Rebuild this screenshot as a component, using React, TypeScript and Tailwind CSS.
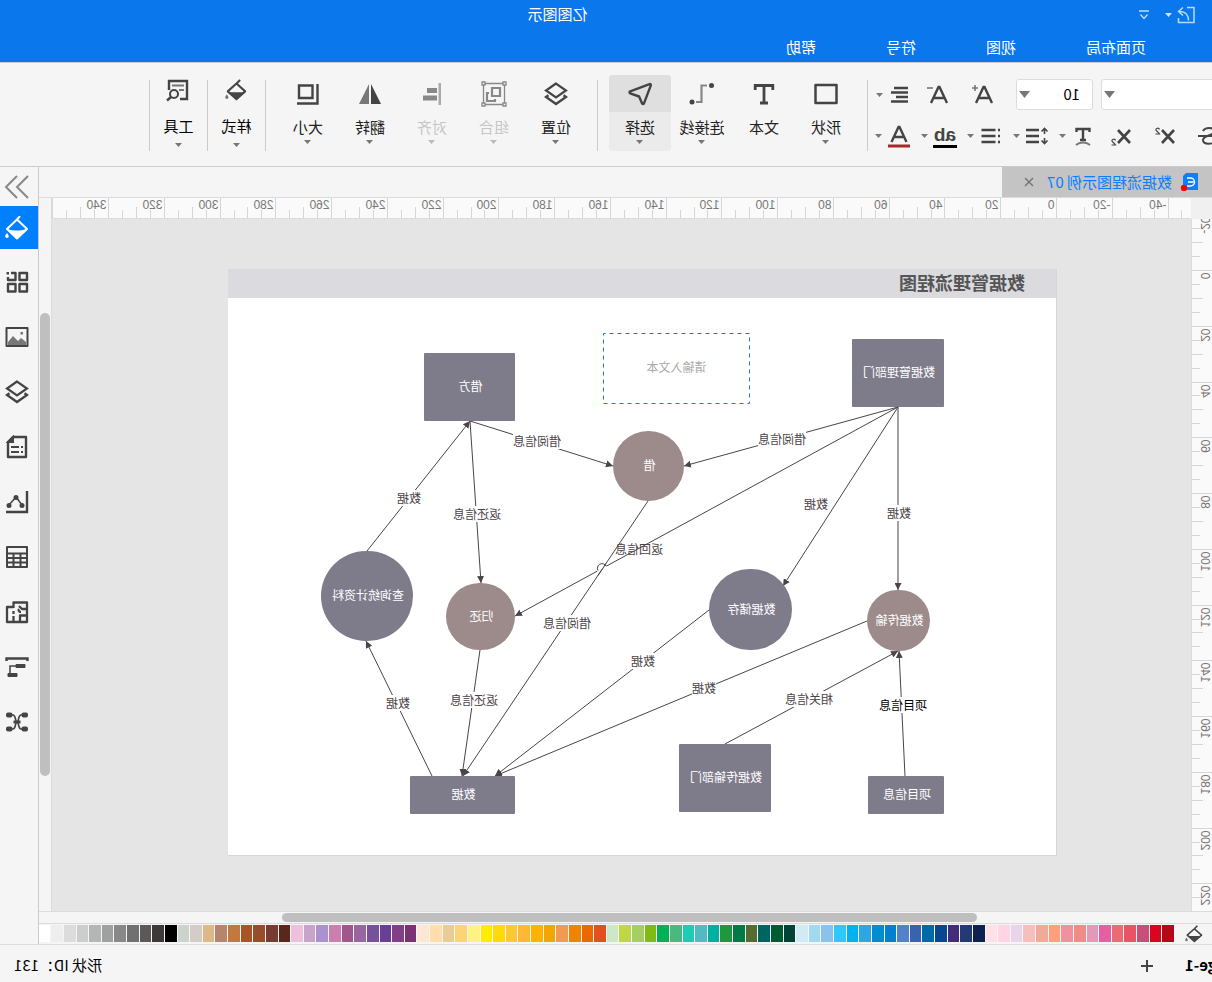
import type { ReactNode } from "react";
import clsx from "clsx";

type Point = [number, number];

type DiagramNode = {
  id: string;
  label: string;
  kind: "box" | "circle";
  tone: "slate" | "brown";
  x: number;
  y: number;
  w: number;
  h: number;
};

type DiagramEdge = {
  id: string;
  from: Point;
  to: Point;
  label: string;
  labelAt: Point;
  strong?: boolean;
};

const menus = ["页面布局", "视图", "符号", "帮助"];

// Sheet coordinates, origin at the sheet's top left corner.
const nodes: DiagramNode[] = [
  { id: "admin", label: "数据管理部门", kind: "box", tone: "slate", x: 112, y: 70, w: 92, h: 68 },
  { id: "borrower", label: "借方", kind: "box", tone: "slate", x: 541, y: 84, w: 91, h: 68 },
  { id: "lend", label: "借", kind: "circle", tone: "brown", x: 372, y: 162, w: 71, h: 70 },
  { id: "query", label: "查询统计资料", kind: "circle", tone: "slate", x: 643, y: 282, w: 92, h: 90 },
  { id: "return", label: "归还", kind: "circle", tone: "brown", x: 541, y: 314, w: 69, h: 67 },
  { id: "store", label: "数据储存", kind: "circle", tone: "slate", x: 264, y: 300, w: 83, h: 81 },
  { id: "transfer", label: "数据传输", kind: "circle", tone: "brown", x: 126, y: 321, w: 63, h: 61 },
  { id: "transfer-dept", label: "数据传输部门", kind: "box", tone: "slate", x: 285, y: 475, w: 92, h: 68 },
  { id: "project", label: "项目信息", kind: "box", tone: "slate", x: 112, y: 507, w: 76, h: 38 },
  { id: "data", label: "数据", kind: "box", tone: "slate", x: 541, y: 507, w: 105, h: 38 },
];

const edges: DiagramEdge[] = [
  { id: "e1", from: [158, 138], to: [158, 321], label: "数据", labelAt: [157, 244] },
  { id: "e2", from: [158, 138], to: [273, 317], label: "数据", labelAt: [240, 235] },
  { id: "e3", from: [158, 138], to: [372, 197], label: "借阅信息", labelAt: [274, 170] },
  { id: "e4", from: [158, 138], to: [541, 347], label: "返回信息", labelAt: [417, 280] },
  { id: "e5", from: [586, 152], to: [443, 197], label: "借阅信息", labelAt: [519, 172] },
  { id: "e6", from: [586, 152], to: [575, 314], label: "返还信息", labelAt: [579, 245] },
  { id: "e7", from: [689, 282], to: [586, 152], label: "数据", labelAt: [647, 229] },
  { id: "e8", from: [408, 232], to: [593, 507], label: "借阅信息", labelAt: [489, 354] },
  { id: "e9", from: [576, 381], to: [594, 507], label: "返还信息", labelAt: [582, 431] },
  { id: "e10", from: [347, 341], to: [561, 507], label: "数据", labelAt: [413, 392] },
  { id: "e11", from: [189, 352], to: [561, 507], label: "数据", labelAt: [352, 419] },
  { id: "e12", from: [331, 475], to: [158, 382], label: "相关信息", labelAt: [247, 430] },
  { id: "e13", from: [151, 507], to: [157, 382], label: "项目信息", labelAt: [153, 436], strong: true },
  { id: "e14", from: [624, 507], to: [690, 372], label: "数据", labelAt: [658, 434] },
];

const swatches = [
  "#b30a18", "#d9051f", "#c94f7a", "#ea5266", "#ec6a73", "#e65f9e", "#e29ab8", "#ee8d88", "#f1919f", "#ffa07a",
  "#efab98", "#f5bfbd", "#ead4e8", "#ffd5e6", "#ffe0e6", "#0d2250", "#233a72", "#432c78", "#06478f", "#0069a8",
  "#3c61ad", "#5383c6", "#0080d0", "#008dd2", "#2ca7e3", "#00b2f0", "#2ec8fb", "#8bc2ec", "#a0d9f0", "#d0ebf6",
  "#004438", "#005a32", "#006562", "#566b2f", "#007b46", "#1e983c", "#00b09f", "#50bcc2", "#1acdb3", "#48ba7d",
  "#00b155", "#7fbb10", "#a5cf62", "#bed742", "#cde8c8", "#e25020", "#eb6800", "#f08400", "#f29a52", "#f2a600",
  "#ffb200", "#ffb833", "#fac934", "#ffd90a", "#ffec00", "#fdf284", "#fdd475", "#eacc9a", "#ffddad", "#fce8d2",
  "#7b3275", "#833f85", "#683f94", "#765399", "#99679f", "#9f588c", "#cd7eb0", "#a992ce", "#c8a5c8", "#ebc1dc",
  "#5a281b", "#783b31", "#954d2b", "#a95328", "#c07942", "#b5866d", "#dfb887", "#d5ccc7", "#cad3cc", "#000000",
  "#3e3939", "#5a5858", "#707070", "#888888", "#9fa1a0", "#b3b6b5", "#cccecd", "#dcdcdc", "#eeeeee", "#ffffff",
];

function Icon({ size = 24, className, children }: { size?: number; className?: string; children: ReactNode }) {
  return (
    <svg
      width={size}
      height={size}
      viewBox={`0 0 ${size} ${size}`}
      fill="none"
      stroke="#444"
      strokeWidth="2"
      className={clsx("shrink-0", className)}
      aria-hidden="true"
    >
      {children}
    </svg>
  );
}

function Caret({ faded = false }: { faded?: boolean }) {
  return (
    <svg width="7" height="4" viewBox="0 0 7 4" fill={faded ? "#bbb" : "#777"} className="shrink-0" aria-hidden="true">
      <path d="M0 0h7L3.500 4z" />
    </svg>
  );
}

function LayersIcon() {
  return (
    <Icon>
      <path d="M12 1.500l10 7-10 7-10-7z" strokeWidth="2.200" />
      <path d="M4.500 13.200L2 15l10 7 10-7-2.500-1.800" strokeWidth="2.400" />
    </Icon>
  );
}

function BucketIcon({ size = 24 }: { size?: number }) {
  return (
    <svg width={size} height={size} viewBox="0 0 24 24" fill="none" stroke="#444" strokeWidth="2.200" aria-hidden="true">
      <path d="M7.500 1l4 4M11.500 5L2 13.500l9.500 8.500 9.500-8.500z" strokeLinejoin="round" />
      <path d="M3 14.500h17L11.500 22z" fill="#444" stroke="none" />
      <path d="M22 16.500c1.300 2 1.800 2.800 1.800 3.500a1.800 1.800 0 0 1-3.600 0c0-.7.500-1.500 1.800-3.500z" fill="#777" stroke="none" />
    </svg>
  );
}

function FontIcon({ children }: { children: ReactNode }) {
  return (
    <Icon>
      <path d="M3 20L10.500 4h1L19 20M6 15h10" strokeWidth="2.400" />
      {children}
    </Icon>
  );
}

function ScriptIcon({ low = false }: { low?: boolean }) {
  return (
    <Icon>
      <path d="M3 6l12 13M15 6L3 19" strokeWidth="2.600" />
      <path
        d={low ? "M17.500 16.500c.5-2 4-1.500 3.500.5-.3 1-2.500 2-3.500 4h4" : "M17.500 5.500c.5-2 4-1.500 3.500.5-.3 1-2.500 2-3.500 4h4"}
        strokeWidth="1.200"
      />
    </Icon>
  );
}

function FormatButton({ name, menu = false, children }: { name: string; menu?: boolean; children: ReactNode }) {
  return (
    <button type="button" aria-label={name} className="flex h-6 shrink-0 items-center gap-[5px]">
      {children}
      {menu && <Caret />}
    </button>
  );
}

function Divider() {
  return <div className="mt-[17px] h-[71px] w-px shrink-0 bg-[#cbcbcb]" />;
}

type ToolButtonProps = {
  label: string;
  menu?: boolean;
  active?: boolean;
  disabled?: boolean;
  children: ReactNode;
};

function ToolButton({ label, menu = true, active = false, disabled = false, children }: ToolButtonProps) {
  return (
    <button
      type="button"
      disabled={disabled}
      className={clsx(
        "mt-3 flex h-[76px] w-[62px] shrink-0 flex-col items-center rounded-sm",
        active && "bg-[#ebebeb]",
        disabled ? "text-[#c6c6c6]" : "text-[#222]",
      )}
    >
      <span className={clsx("flex h-[37px] w-full items-center justify-center rounded-t-sm", active && "bg-[#dfdfdf]")}>
        {children}
      </span>
      <span className="mt-[5px] text-[15px] leading-5">{label}</span>
      {menu && <span className="mt-[3px] flex"><Caret faded={disabled} /></span>}
    </button>
  );
}

function SideToolButton({ label, children }: { label: string; children: ReactNode }) {
  return (
    <button type="button" className="mt-3 flex h-[76px] w-[57px] shrink-0 flex-col items-center text-black">
      <span className="flex h-[30px] items-center">{children}</span>
      <span className="mt-[11px] text-[15px] leading-5">{label}</span>
      <span className="mt-[7px] flex"><Caret /></span>
    </button>
  );
}

function Combo({ name, value, className }: { name: string; value: string; className?: string }) {
  return (
    <div className={clsx("relative h-[31px]", className)}>
      <select
        aria-label={name}
        defaultValue={value}
        className="h-full w-full appearance-none rounded-[3px] border border-[#dcdcdc] bg-white pl-3 text-[15px] text-black"
      >
        <option value={value}>{value}</option>
      </select>
      <svg width="11" height="7" viewBox="0 0 11 7" className="pointer-events-none absolute right-[3px] top-3" aria-hidden="true">
        <path d="M0 0h11L5.500 7z" fill="#777" />
      </svg>
    </div>
  );
}

function TitleBar() {
  return (
    <header className="border-b border-[#cbcbcb] bg-[#0a77ec] text-white">
      <div className="flex h-8 items-center pb-[3px] pl-4">
        <button type="button" aria-label="撤销" className="flex items-center gap-1">
          <svg width="20" height="20" viewBox="0 0 20 20" fill="none" stroke="#b9dbff" strokeWidth="1.500" aria-hidden="true">
            <path d="M9 2.500H2v15h15.500V13" />
            <path d="M7.500 15.500c0-5 3-9 9-9M13 2.500l4.500 4-4.500 4" />
          </svg>
          <svg width="7" height="4" viewBox="0 0 7 4" fill="#cfe6ff" aria-hidden="true">
            <path d="M0 0h7L3.500 4z" />
          </svg>
        </button>
        <button type="button" aria-label="自定义" className="ml-4">
          <svg width="10" height="10" viewBox="0 0 10 10" fill="none" stroke="#bfe0ff" strokeWidth="1.300" aria-hidden="true">
            <path d="M0 1h10M1.500 4.500L5 8.500l3.500-4" />
          </svg>
        </button>
        <h1 className="mx-auto pl-6 text-[15px]">亿图图示</h1>
      </div>
      <nav className="flex h-[30px] items-center gap-[70px] pl-[66px] text-[15px]">
        {menus.map((menu) => (
          <button key={menu} type="button" className="leading-5">
            {menu}
          </button>
        ))}
      </nav>
    </header>
  );
}

function FontGroup() {
  return (
    <div className="w-[344px] shrink-0 pt-4">
      <div className="flex items-center">
        <Combo name="字体" value="" className="-ml-1 w-[115px]" />
        <Combo name="字号" value="10" className="ml-2 w-[77px]" />
        <div className="ml-[21px] flex gap-[21px]">
          <FormatButton name="增大字号">
            <FontIcon>
              <path d="M17 5h6M20 2v6" stroke="#777" strokeWidth="1.600" />
            </FontIcon>
          </FormatButton>
          <FormatButton name="减小字号">
            <FontIcon>
              <path d="M17 5h6" stroke="#777" strokeWidth="1.600" />
            </FontIcon>
          </FormatButton>
        </div>
        <div className="ml-[14px]">
          <FormatButton name="对齐方式" menu>
            <Icon>
              <path d="M4 5h14M4 9.500h17M4 14h12M4 18.500h17" strokeWidth="2.400" />
            </Icon>
          </FormatButton>
        </div>
      </div>
      <div className="mt-[14px] flex items-center">
        <div className="-ml-[9px] flex gap-5">
          <FormatButton name="删除线">
            <Icon>
              <path d="M18 7c-2-4-11-4-11 0 0 5 11 4 11 9s-11 5-12 0M4 12h19" />
            </Icon>
          </FormatButton>
          <FormatButton name="上标">
            <ScriptIcon />
          </FormatButton>
          <FormatButton name="下标">
            <ScriptIcon low />
          </FormatButton>
        </div>
        <div className="ml-[14px] flex gap-[10px]">
          <FormatButton name="文字方向" menu>
            <Icon>
              <path d="M5.500 8V5h13v3M12 5v11M9 16h6" strokeWidth="2.400" />
              <path d="M5 21c4-3.500 10-3.500 14 0" stroke="#777" />
            </Icon>
          </FormatButton>
          <FormatButton name="行距" menu>
            <Icon>
              <path d="M1.500 7.500l3-3 3 3M4.500 5v5M1.500 16.500l3 3 3-3M4.500 19v-5" strokeWidth="1.600" />
              <path d="M10 6h13M10 12h13M10 18h13" strokeWidth="2.400" />
            </Icon>
          </FormatButton>
          <FormatButton name="项目符号" menu>
            <Icon>
              <path d="M3 6h2M3 12h2M3 18h2M7.500 6h14M7.500 12h14M7.500 18h14" strokeWidth="2.400" />
            </Icon>
          </FormatButton>
          <FormatButton name="突出显示" menu>
            <span className="flex w-6 flex-col items-center border-b-[3px] border-black font-['Liberation_Sans',sans-serif] text-[19px] font-bold leading-[21px] text-[#444]">
              ab
            </span>
          </FormatButton>
          <FormatButton name="字体颜色" menu>
            <Icon>
              <path d="M4.500 18L11.500 3h1l7 15M7.500 13h9" strokeWidth="2.400" />
              <path d="M1 22h22" stroke="#a52a2a" strokeWidth="3" />
            </Icon>
          </FormatButton>
        </div>
      </div>
    </div>
  );
}

function Ribbon() {
  return (
    <div className="flex h-[104px] shrink-0 border-b border-[#cbcbcb] bg-[#f5f5f5]">
      <FontGroup />
      <Divider />
      <div className="flex pl-[10px] pr-[11px]">
        <ToolButton label="形状">
          <Icon>
            <path d="M1.500 3h21v18h-21z" strokeWidth="2.500" strokeLinejoin="round" />
          </Icon>
        </ToolButton>
        <ToolButton label="文本" menu={false}>
          <Icon>
            <path d="M3.200 8V3.500h17.600V8M12 3.500V21M8 21h8" strokeWidth="2.800" />
          </Icon>
        </ToolButton>
        <ToolButton label="连接线">
          <Icon size={26}>
            <path d="M8 4.500h5.500v16.500H19" stroke="#888" strokeWidth="2.200" />
            <circle cx="3.500" cy="4.500" r="2.500" fill="#444" stroke="none" />
            <circle cx="23" cy="21" r="2.500" fill="#444" stroke="none" />
          </Icon>
        </ToolButton>
        <ToolButton label="选择" active>
          <Icon>
            <path
              d="M2.500 2.200c-1-.4-1.500.3-1.300 1.200L8 21.400c.4 1 1.500 1 1.900 0l3-6.900 8.900-3.200c1-.4 1-1.600 0-2z"
              strokeWidth="2.400"
              strokeLinejoin="round"
            />
          </Icon>
        </ToolButton>
      </div>
      <Divider />
      <div className="flex pl-[10px] pr-[11px]">
        <ToolButton label="位置">
          <LayersIcon />
        </ToolButton>
        <ToolButton label="组合" disabled>
          <Icon size={26}>
            <g stroke="#888" strokeWidth="1.300">
              <path d="M2.500 2.500h21v21h-21z" />
              <path d="M1 1h3v3H1zM22 1h3v3h-3zM1 22h3v3H1zM22 22h3v3h-3z" fill="#f5f5f5" />
              <path d="M7 7h8v8H7zM18 12h2v8h-8v-2" strokeWidth="2.200" />
            </g>
          </Icon>
        </ToolButton>
        <ToolButton label="对齐" disabled>
          <Icon>
            <g stroke="none" fill="#888">
              <path d="M3 1h2.500v22H3z" fill="#aaa" />
              <path d="M7 6h10v5H7zM7 13.500h14v5H7z" />
            </g>
          </Icon>
        </ToolButton>
        <ToolButton label="翻转">
          <Icon>
            <path d="M11 2v20H1z" fill="#444" stroke="none" />
            <path d="M13 2v20h10z" fill="#777" stroke="none" />
          </Icon>
        </ToolButton>
        <ToolButton label="大小">
          <Icon>
            <path d="M2.500 2v19.500H23M7.500 3.500h13.500v12.500H7.500z" strokeWidth="2.400" />
          </Icon>
        </ToolButton>
      </div>
      <Divider />
      <SideToolButton label="样式">
        <BucketIcon size={22} />
      </SideToolButton>
      <Divider />
      <SideToolButton label="工具">
        <Icon>
          <path d="M10 21H3V3h18v9" strokeWidth="2.400" />
          <path d="M6 7.500h12M6 12h5" stroke="#777" />
          <circle cx="16" cy="16" r="4" />
          <path d="M19 19l4 3.500" strokeWidth="2.400" />
        </Icon>
      </SideToolButton>
      <Divider />
    </div>
  );
}

function DocumentTabs() {
  return (
    <div className="flex h-[31px] shrink-0 border-b border-[#dcdcdc] bg-[#f5f5f5]">
      <div className="flex w-[210px] items-center bg-[#c4c4c4] pl-[14px]">
        <svg width="18" height="18" viewBox="0 0 18 18" className="shrink-0" aria-hidden="true">
          <path d="M0 0h12l3 3v14H0z" fill="#0a80ff" />
          <path d="M11 5H7.500a3.500 3.500 0 0 0 0 8H11M4.500 9H10" fill="none" stroke="#fff" strokeWidth="1.500" />
          <circle cx="14" cy="15" r="3.200" fill="#f00" />
        </svg>
        <span className="ml-2 whitespace-nowrap text-[15px] leading-5 text-[#0a7eff]">数据流程图示例 07</span>
        <button type="button" aria-label="关闭" className="ml-auto mr-[22px]">
          <svg width="10" height="10" viewBox="0 0 10 10" stroke="#777" strokeWidth="1.500" aria-hidden="true">
            <path d="M1 1l8 8M9 1L1 9" />
          </svg>
        </button>
      </div>
    </div>
  );
}

// Millimetres to pixels on both rulers.
const RULER_SCALE = 2.788;

function rulerMarks(from: number, to: number): number[] {
  return Array.from({ length: (to - from) / 5 + 1 }, (_, i) => from + i * 5);
}

function HorizontalRuler() {
  return (
    <svg
      width="100%"
      height="21"
      stroke="#d6d6d6"
      fill="none"
      className="border-b border-[#dcdcdc] bg-[#fafafa] font-['Liberation_Sans',sans-serif] text-[12px]"
      role="img"
      aria-label="水平标尺"
    >
      {rulerMarks(-45, 360).map((mark) => {
        const x = Math.round(134 + mark * RULER_SCALE) + 0.5;
        const major = mark % 20 === 0;
        return (
          <g key={mark}>
            <path d={`M${x} ${major ? 0 : mark % 10 === 0 ? 9 : 12}V20`} />
            {major && mark < 360 && (
              <text x={x + 2} y="11" stroke="none" fill="#777">
                {mark}
              </text>
            )}
          </g>
        );
      })}
    </svg>
  );
}

function VerticalRuler() {
  return (
    <svg
      width="21"
      height="100%"
      stroke="#d6d6d6"
      fill="none"
      className="border-r border-[#dcdcdc] bg-[#fafafa] font-['Liberation_Sans',sans-serif] text-[12px]"
      role="img"
      aria-label="垂直标尺"
    >
      {rulerMarks(-20, 230).map((mark) => {
        const y = Math.round(51 + mark * RULER_SCALE) + 0.5;
        const major = mark % 20 === 0;
        return (
          <g key={mark}>
            <path d={`M${major ? 0 : mark % 10 === 0 ? 9 : 12} ${y}H20`} />
            {major && (
              <text transform={`translate(11 ${y + 2}) rotate(-90)`} textAnchor="end" stroke="none" fill="#777">
                {mark}
              </text>
            )}
          </g>
        );
      })}
    </svg>
  );
}

function Sheet() {
  return (
    <div className="relative ml-[134px] mt-[50px] h-[587px] w-[829px] shrink-0 border-b border-l border-[#d6d6d6] bg-white">
      <h2 className="h-[29px] bg-[#dadadf] pl-[31px] text-[18px] font-bold leading-[27px] text-[#555]">数据管理流程图</h2>
      <svg width="829" height="587" viewBox="0 0 829 587" className="absolute left-0 top-0" stroke="#4b4347" fill="none" aria-hidden="true">
        <defs>
          <marker id="arrow" markerWidth="8" markerHeight="8" refX="7" refY="3.500" orient="auto" markerUnits="userSpaceOnUse">
            <path d="M0 0L7 3.500 0 7z" fill="#4b4347" stroke="none" />
          </marker>
        </defs>
        {edges.map(({ id, from, to }) => (
          <path key={id} d={`M${from.join(" ")}L${to.join(" ")}`} markerEnd="url(#arrow)" />
        ))}
        {/* line jump where two connectors cross */}
        <path d="M450 297l9 5" stroke="#fff" strokeWidth="2" />
        <path d="M450 297a4.500 4.500 0 1 1 8 4.500" />
        <path d="M450 294.500l8 12" />
      </svg>
      {edges.map(({ id, label, labelAt, strong }) => (
        <span
          key={id}
          className={clsx(
            "absolute -translate-x-1/2 -translate-y-1/2 whitespace-nowrap text-[12px] leading-4",
            id !== "e4" && "bg-white",
            strong ? "text-black" : "text-[#4b4347]",
          )}
          style={{ left: labelAt[0], top: labelAt[1] }}
        >
          {label}
        </span>
      ))}
      {nodes.map((node) => (
        <div
          key={node.id}
          className={clsx(
            "absolute flex items-center justify-center whitespace-nowrap pb-[2px] pr-[2px] text-[12px] leading-4 text-white",
            node.kind === "circle" ? "rounded-full" : "rounded-[1px]",
            node.tone === "slate" ? "bg-[#7e7b8b]" : "bg-[#9c8b8a]",
          )}
          style={{ left: node.x, top: node.y, width: node.w, height: node.h }}
        >
          {node.label}
        </div>
      ))}
      <div className="absolute left-[306px] top-[64px] flex h-[71px] w-[147px] items-center justify-center pb-[3px] text-[12px] text-[#aaa]">
        <svg width="147" height="71" className="absolute inset-0" fill="none" stroke="#0a7ae6" strokeDasharray="4 4" aria-hidden="true">
          <path d="M.5.5h146v70H.5z" />
        </svg>
        请输入文本
      </div>
    </div>
  );
}

function ColorBar() {
  return (
    <div className="flex h-[21px] shrink-0 border-t border-[#dcdcdc] bg-[#f5f5f5] pt-px">
      <div className="flex h-[17px] w-[38px] shrink-0 items-center pl-[9px]">
        <BucketIcon size={18} />
      </div>
      <div className="flex h-[17px] flex-1 gap-px">
        {swatches.map((color) => (
          <button key={color} type="button" aria-label={color} className="min-w-0 flex-1" style={{ backgroundColor: color }} />
        ))}
      </div>
    </div>
  );
}

const panels: { name: string; icon: ReactNode }[] = [
  {
    name: "符号库",
    icon: (
      <Icon>
        <path d="M2 3h7.500v7H2zM2 14h7.500v7.500H2zM13.500 14H21v7.500h-7.500zM18 3h-4.500v7H21V7" strokeWidth="2.400" strokeLinejoin="round" />
        <path d="M20 2h2.500v2.500H20z" fill="#444" stroke="none" />
      </Icon>
    ),
  },
  {
    name: "图片",
    icon: (
      <Icon>
        <path d="M1.500 3h21v18h-21z" strokeLinejoin="round" />
        <path d="M3 20v-3l5-4 3 3 5-5 5 6v3z" fill="#777" stroke="none" />
        <path d="M6 7h2.500v2.500H6z" fill="#777" stroke="none" />
      </Icon>
    ),
  },
  { name: "图层", icon: <LayersIcon /> },
  {
    name: "页面设置",
    icon: (
      <Icon>
        <path d="M3 2h13l5 5v15H3z" strokeWidth="2.400" strokeLinejoin="round" />
        <path d="M16 2v5h5z" fill="#444" />
        <path d="M6 12h2M10 12h8M6 17h2M10 17h8" />
      </Icon>
    ),
  },
  {
    name: "图表",
    icon: (
      <Icon>
        <path d="M2 1v21h21" strokeWidth="2.400" />
        <path d="M7 15l6-8 7 8" strokeWidth="1.500" />
        <g fill="#444" stroke="none">
          <circle cx="7" cy="15.500" r="2.500" />
          <circle cx="13" cy="7.500" r="2.500" />
          <circle cx="20" cy="15.500" r="2.500" />
        </g>
      </Icon>
    ),
  },
  {
    name: "表格",
    icon: (
      <Icon>
        <path d="M2 2h20v20H2zM2 8.500h20M2 13h20M2 17.500h20M8.500 8v14M15.500 8v14" strokeLinejoin="round" />
      </Icon>
    ),
  },
  {
    name: "平面图",
    icon: (
      <Icon>
        <path d="M15.500 8V2.500H2V22h20V7h-6.500M2 9h5l3-3M2 15.500h7V22M15.500 22v-6M15.500 14v-3M10 9c1 1.500 0 3-2 3" strokeWidth="2.300" strokeLinejoin="round" />
      </Icon>
    ),
  },
  {
    name: "泳道",
    icon: (
      <Icon>
        <path d="M1.500 6V3.500h21V6" strokeWidth="2.400" />
        <path d="M12 11h7v8" strokeWidth="1.500" />
        <path d="M4 9.500h9v3H4zM12 18.500h9v3h-9z" fill="#444" strokeWidth="1" />
      </Icon>
    ),
  },
  {
    name: "思维导图",
    icon: (
      <Icon>
        <path d="M5 5h3c3 0 2 7 4 7s1-7 4-7h3M5 19h3c3 0 2-7 4-7s1 7 4 7h3" strokeWidth="1.600" />
        <g fill="#444" stroke="none">
          <rect x="1" y="2.500" width="6.500" height="5" rx="2" />
          <rect x="16.500" y="2.500" width="6.500" height="5" rx="2" />
          <rect x="1" y="16.500" width="6.500" height="5" rx="2" />
          <rect x="16.500" y="16.500" width="6.500" height="5" rx="2" />
          <rect x="8.500" y="10.500" width="7" height="3" />
        </g>
      </Icon>
    ),
  },
];

function SidePanel() {
  return (
    <aside className="flex w-[39px] shrink-0 flex-col border-l border-[#cbcbcb] bg-[#f5f5f5]">
      <button type="button" aria-label="折叠面板" className="flex h-[39px] items-center justify-center pl-1">
        <svg width="26" height="26" viewBox="0 0 26 26" fill="none" stroke="#888" strokeWidth="2" aria-hidden="true">
          <path d="M2 2l11 11L2 24M13 2l11 11-11 11" />
        </svg>
      </button>
      <button type="button" aria-label="填充" className="flex h-[43px] items-center justify-center bg-[#0080ff] pl-1">
        <svg width="24" height="24" viewBox="0 0 24 24" fill="none" stroke="#fff" strokeWidth="2" aria-hidden="true">
          <path d="M9 0l3 3.500M12 3.500L2 13l10 9.500L22 13z" strokeLinejoin="round" />
          <path d="M3 13c5 2 13 2 18 0l-9 9.500z" fill="#fff" stroke="none" />
          <path d="M22 17c1.500 1.800 1.800 2.600 1.800 3.300a1.800 1.800 0 0 1-3.600 0c0-.7.6-1.500 1.800-3.300z" fill="#fff" stroke="none" />
        </svg>
      </button>
      <div className="mt-[5px] flex flex-col">
        {panels.map((panel) => (
          <button key={panel.name} type="button" aria-label={panel.name} className="flex h-[55px] items-center justify-center pl-1">
            {panel.icon}
          </button>
        ))}
      </div>
    </aside>
  );
}

function StatusBar() {
  return (
    <footer className="flex h-[38px] shrink-0 items-center border-t border-[#dcdcdc] bg-[#f5f5f5] pt-1 text-[15px] text-black">
      <button type="button" className="-ml-[23px] font-bold">
        Page-1
      </button>
      <button type="button" aria-label="新建页面" className="ml-8">
        <svg width="12" height="12" viewBox="0 0 12 12" stroke="#444" strokeWidth="2" aria-hidden="true">
          <path d="M6 0v12M0 6h12" />
        </svg>
      </button>
      <span className="ml-auto pr-[14px]">形状 ID：131</span>
    </footer>
  );
}

export default function App() {
  return (
    <div className="flex h-screen -scale-x-100 flex-col overflow-hidden bg-[#f5f5f5] font-['Noto_Sans_CJK_SC',sans-serif]">
      <TitleBar />
      <Ribbon />
      <div className="flex min-h-0 flex-1">
        <main className="flex min-w-0 flex-1 flex-col">
          <DocumentTabs />
          <div className="flex min-h-0 flex-1">
            <div className="grid min-w-0 flex-1 grid-cols-[21px_1fr] grid-rows-[21px_1fr]">
              <div className="bg-[#f0f0f0]" />
              <HorizontalRuler />
              <VerticalRuler />
              <div className="flex min-h-0 min-w-0 items-start overflow-hidden bg-[#e5e5e5]">
                <Sheet />
              </div>
            </div>
            <div className="w-[13px] shrink-0 border-l border-[#dcdcdc] bg-[#f5f5f5]">
              <div className="ml-px mr-px mt-[115px] h-[65%] rounded-[5px] bg-[#bfbfbf]" />
            </div>
          </div>
          <div className="flex h-3 shrink-0 border-t border-[#dcdcdc] bg-[#f5f5f5] pl-[21px] pr-3 pt-px">
            <div className="ml-[214px] h-[9px] w-[61%] rounded-[5px] bg-[#bfbfbf]" />
          </div>
          <ColorBar />
        </main>
        <SidePanel />
      </div>
      <StatusBar />
    </div>
  );
}
